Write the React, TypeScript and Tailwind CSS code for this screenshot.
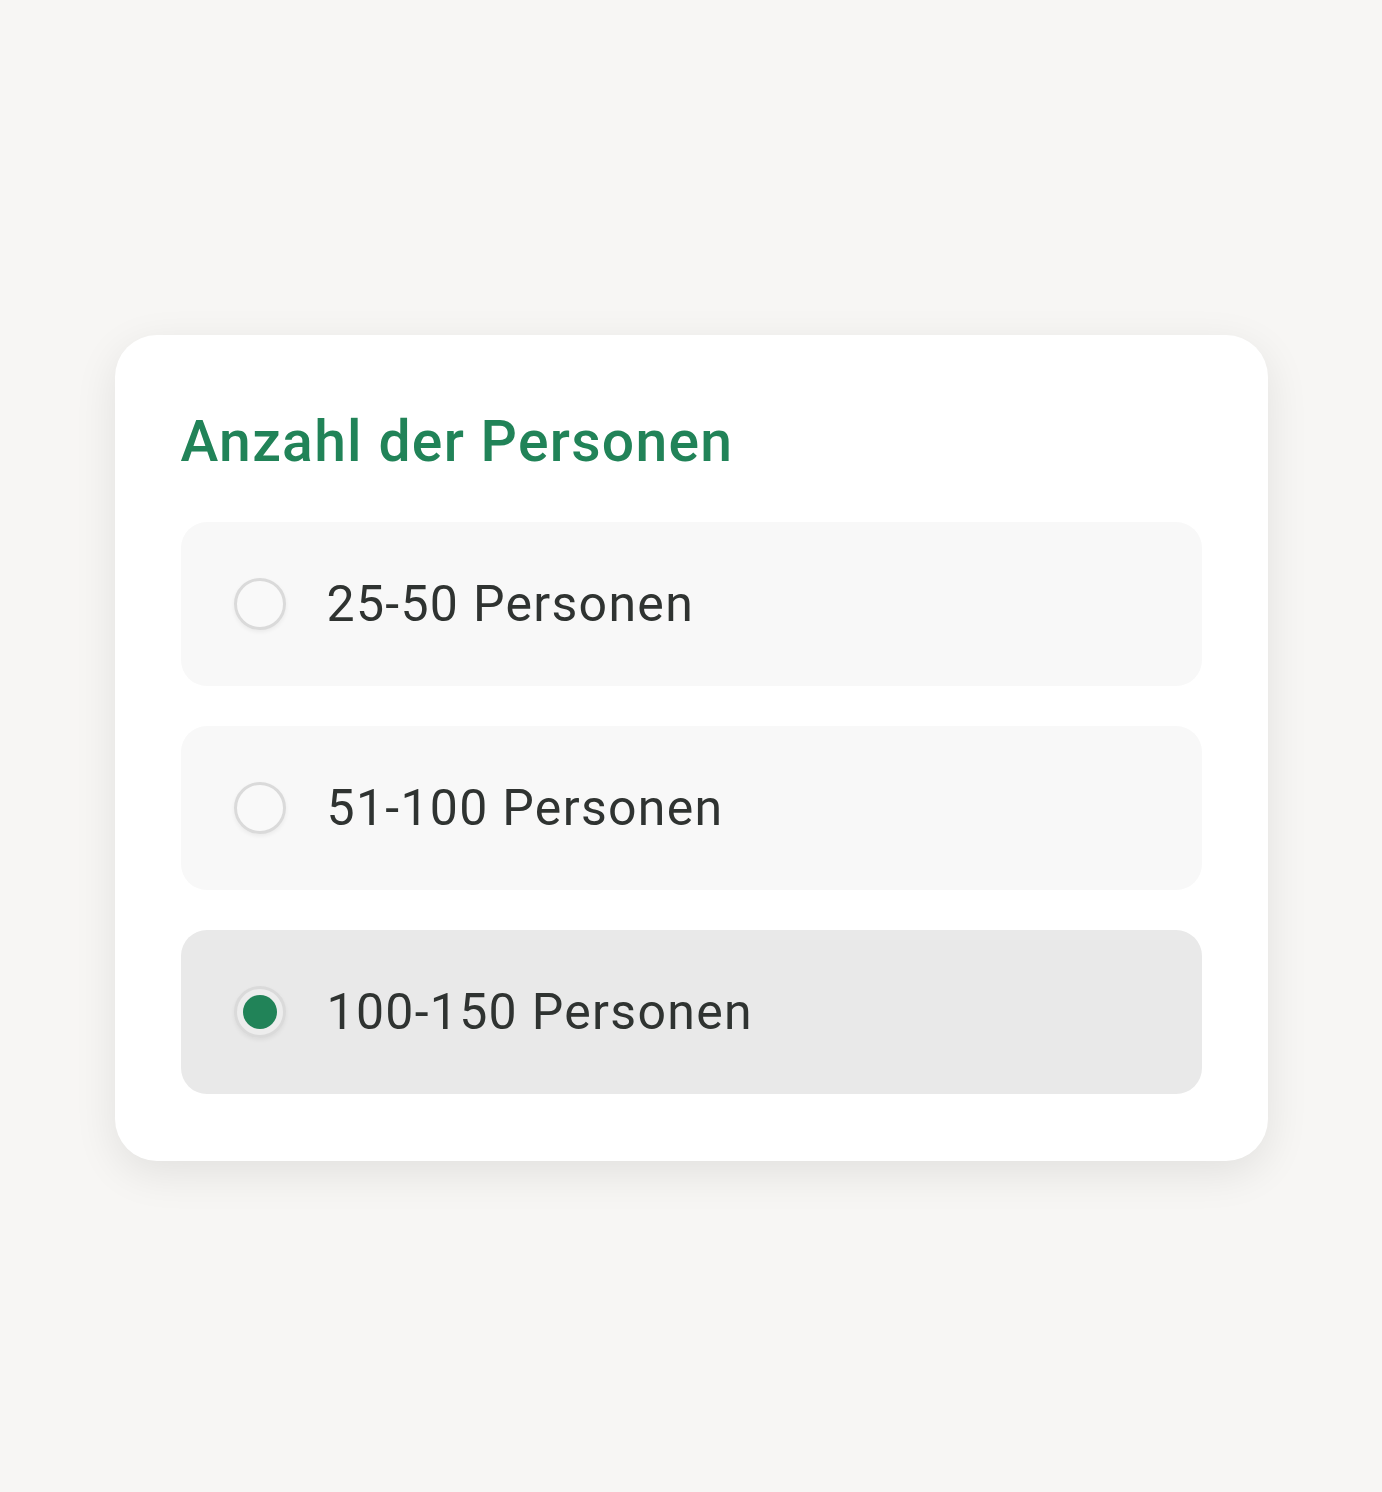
import React, { useState } from "react";

const options = ["25-50 Personen", "51-100 Personen", "100-150 Personen"];

export default function App() {
  const [selected, setSelected] = useState(2);
  return (
    <div
      className="min-h-screen h-[1492px] w-full bg-[#f7f6f4] flex items-center justify-center"
      style={{ fontFamily: "Roboto, 'Open Sans', sans-serif" }}
    >
      <div className="w-[1153px] bg-white rounded-[42px] px-[66px] pt-[67px] pb-[67px] mt-[3px] shadow-[0_12px_44px_rgba(0,0,0,0.09)]">
        <h2 className="text-[57px] leading-[80px] font-medium text-[#218358] tracking-[1.3px] mb-[40px]">
          Anzahl der Personen
        </h2>
        <div className="flex flex-col gap-[40px]">
          {options.map((o, i) => {
            const active = i === selected;
            return (
              <button
                key={o}
                onClick={() => setSelected(i)}
                className={
                  "h-[164px] w-full rounded-[26px] flex items-center pl-[53px] text-left " +
                  (active ? "bg-[#e9e9e9]" : "bg-[#f8f8f8]")
                }
              >
                <span className="w-[52px] h-[52px] rounded-full border-[3px] border-[#dadada] bg-white/20 shadow-[0_2px_4px_rgba(0,0,0,0.06)] flex items-center justify-center shrink-0">
                  {active && <span className="w-[34px] h-[34px] rounded-full bg-[#218358]" />}
                </span>
                <span className="ml-[41px] text-[50px] text-[#2f3331] tracking-[1.3px] leading-none">{o}</span>
              </button>
            );
          })}
        </div>
      </div>
    </div>
  );
}
